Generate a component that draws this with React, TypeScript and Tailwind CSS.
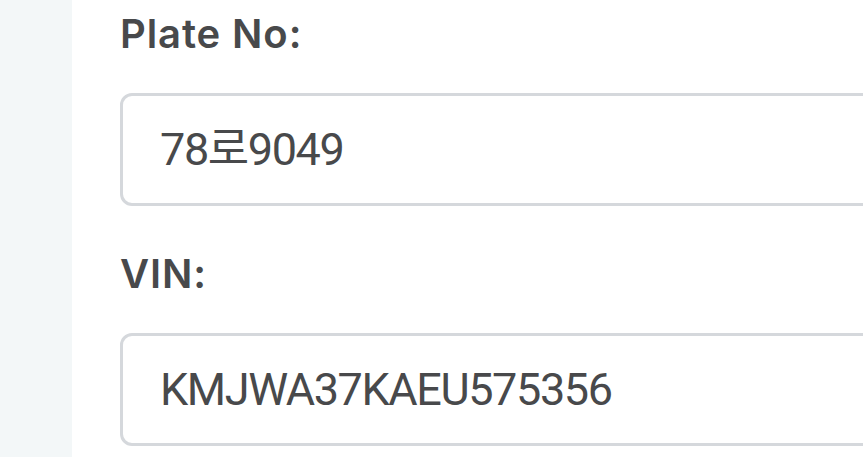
import React from "react";

const font = { fontFamily: "Inter, 'Noto Sans CJK KR', sans-serif" };
const inputFont = { fontFamily: "Roboto, 'Noto Sans CJK KR', sans-serif" };

function Field({ label, value, first }: { label: string; value: string; first?: boolean }) {
  return (
    <div className={first ? "pt-[14px]" : "pt-[48px]"}>
      <div className="text-[40px] leading-[40px] font-semibold tracking-[0.9px] text-[#48494b]">{label}</div>
      <div className="mt-[39px] h-[113px] w-[800px] rounded-[12px] border-[3px] border-[#d5d8dc] bg-white flex items-center pl-[37px]">
        <span className="text-[45px] leading-[45px] tracking-[-1.4px] text-[#48494b]" style={inputFont}>{value}</span>
      </div>
    </div>
  );
}

export default function App() {
  return (
    <div className="flex h-[457px] w-[863px] overflow-hidden bg-white" style={font}>
      <div className="w-[72px] shrink-0 bg-[#f3f7f8]" />
      <div className="flex-1 pl-[48px]">
        <Field label="Plate No:" value="78로9049" first />
        <Field label="VIN:" value="KMJWA37KAEU575356" />
      </div>
    </div>
  );
}
